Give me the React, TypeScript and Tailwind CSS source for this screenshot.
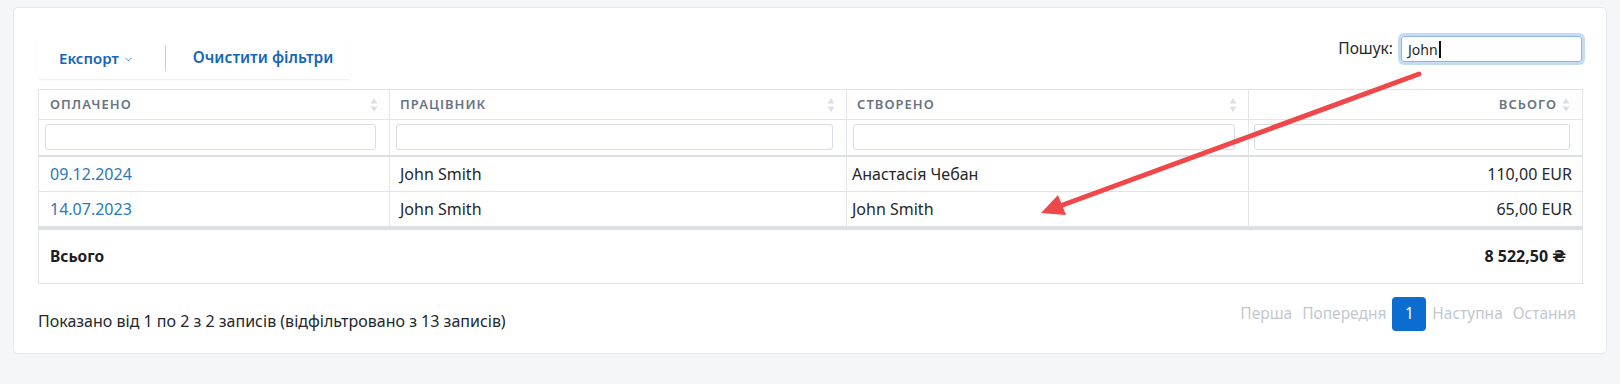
import { ChevronDown } from 'lucide-react';

interface Row {
  paid: string;
  employee: string;
  created: string;
  total: string;
}

const rows: Row[] = [
  { paid: '09.12.2024', employee: 'John Smith', created: 'Анастасія Чебан', total: '110,00 EUR' },
  { paid: '14.07.2023', employee: 'John Smith', created: 'John Smith', total: '65,00 EUR' },
];

function SortIcon() {
  return (
    <svg width="8" height="16" viewBox="0 0 8 16" className="shrink-0">
      <path d="M4 1 L7.5 6.5 H0.5 Z" fill="#dde0e4" />
      <path d="M4 15 L7.5 9.5 H0.5 Z" fill="#dde0e4" />
    </svg>
  );
}

function FilterInput() {
  return <div className="h-[26px] w-full rounded-[3px] border border-[#d9dce1] bg-white" />;
}

export default function App() {
  return (
    <div className="relative h-[384px] w-[1620px] overflow-hidden bg-[#f5f6f9] pl-[13px] pt-[7px] font-['Noto_Sans',sans-serif] text-[#24282c]">
      <div className="w-[1594px] rounded-[5px] border border-[#e4e7eb] bg-white px-[24px] pb-[20px] pt-[28px]">
        {/* toolbar */}
        <div className="flex items-start justify-between">
          <div className="mt-[1px] flex h-[42px] items-center rounded-b-[3px] pl-[21px] pr-[18px] shadow-[0_1px_2px_rgba(0,0,0,0.07)]">
            <button className="flex items-center gap-[4px] text-[15px] font-semibold text-[#1466bd]">
              Експорт
              <ChevronDown className="mt-[2px] h-[11px] w-[11px]" strokeWidth={1.6} />
            </button>
            <div className="ml-[31px] mr-[27px] h-[26px] w-px bg-[#c9cdd3]" />
            <button className="text-[15.5px] font-semibold text-[#1466bd]">Очистити фільтри</button>
          </div>
          <div className="flex items-center gap-[8px]">
            <span className="text-[15.5px] text-[#24282c]">Пошук:</span>
            <div className="flex h-[26px] w-[181px] items-center rounded-[3px] border border-[#8fb5e6] px-[6px] text-[14px] text-[#24282c] shadow-[0_0_0_3px_#c5dbf3]">
              John
              <span className="ml-[1px] h-[17px] w-[2px] bg-[#111]" />
            </div>
          </div>
        </div>

        {/* table */}
        <table className="mt-[10px] w-[1544px] table-fixed border-collapse border border-[#e1e4e8] text-[16px]">
          <colgroup>
            <col className="w-[351px]" />
            <col className="w-[457px]" />
            <col className="w-[402px]" />
            <col className="w-[334px]" />
          </colgroup>
          <thead>
            <tr className="h-[30px] text-[13px] font-semibold uppercase tracking-[0.08em] text-[#6b7483]">
              <th className="border border-[#e1e4e8] pl-[11px] pr-[11px] text-left font-semibold">
                <div className="flex items-center justify-between">
                  <span>Оплачено</span>
                  <SortIcon />
                </div>
              </th>
              <th className="border border-[#e1e4e8] pl-[10px] pr-[11px] text-left font-semibold">
                <div className="flex items-center justify-between">
                  <span>Працівник</span>
                  <SortIcon />
                </div>
              </th>
              <th className="border border-[#e1e4e8] pl-[10px] pr-[11px] text-left font-semibold">
                <div className="flex items-center justify-between">
                  <span>Створено</span>
                  <SortIcon />
                </div>
              </th>
              <th className="border border-[#e1e4e8] pl-[10px] pr-[12px] text-right font-semibold">
                <div className="flex items-center justify-end gap-[5px]">
                  <span>Всього</span>
                  <SortIcon />
                </div>
              </th>
            </tr>
            <tr className="h-[36px] border-b-2 border-[#dcdfe3]">
              <th className="border-x border-[#e1e4e8] pl-[6px] pr-[13px]"><FilterInput /></th>
              <th className="border-x border-[#e1e4e8] pl-[6px] pr-[13px]"><FilterInput /></th>
              <th className="border-x border-[#e1e4e8] pl-[6px] pr-[13px]"><FilterInput /></th>
              <th className="border-x border-[#e1e4e8] pl-[5px] pr-[12px]"><FilterInput /></th>
            </tr>
          </thead>
          <tbody>
            {rows.map((r) => (
              <tr key={r.paid} className="h-[36px] border-b border-[#e1e4e8]">
                <td className="border-x border-[#e1e4e8] px-[11px] text-[#2a78bd]">{r.paid}</td>
                <td className="border-x border-[#e1e4e8] px-[10px]">{r.employee}</td>
                <td className="border-x border-[#e1e4e8] pl-[5px] pr-[10px]">{r.created}</td>
                <td className="border-x border-[#e1e4e8] px-[10px] text-right">{r.total}</td>
              </tr>
            ))}
          </tbody>
          <tfoot>
            <tr className="h-[56px] border-t-4 border-[#dcdfe3] font-bold">
              <td colSpan={3} className="px-[11px] text-[15.5px] text-[#1c2024]">Всього</td>
              <td className="pr-[16px] text-right text-[16px] text-[#1c2024]">
                8 522,50 <span className="font-['DejaVu_Sans',sans-serif]">₴</span>
              </td>
            </tr>
          </tfoot>
        </table>

        {/* info + pagination */}
        <div className="mt-[13px] flex items-start justify-between">
          <div className="mt-[12px] text-[16px] text-[#24282c]">
            Показано від 1 по 2 з 2 записів (відфільтровано з 13 записів)
          </div>
          <div className="mr-[1px] flex h-[34px] items-center text-[15.5px] text-[#c3c8cf]">
            <span className="px-[5px]">Перша</span>
            <span className="px-[5px]">Попередня</span>
            <span className="mx-[1px] flex h-[34px] w-[34px] items-center justify-center rounded-[4px] bg-[#0b6dcf] text-white">1</span>
            <span className="px-[5px]">Наступна</span>
            <span className="px-[5px]">Остання</span>
          </div>
        </div>
      </div>

      {/* annotation arrow */}
      <svg className="pointer-events-none absolute left-0 top-0" width="1620" height="384">
        <line x1="1419" y1="74" x2="1060" y2="206" stroke="#f0474a" strokeWidth="5" strokeLinecap="round" />
        <polygon points="1041,213 1066,215 1058,195" fill="#f0474a" />
      </svg>
    </div>
  );
}
